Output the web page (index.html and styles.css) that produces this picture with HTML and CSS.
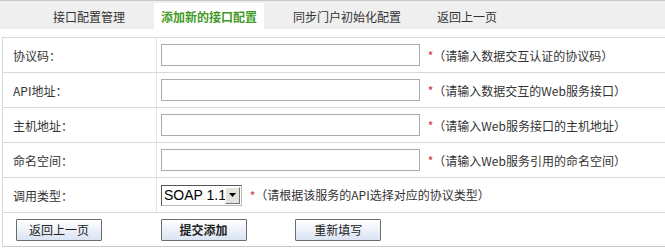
FILE: index.html
```html
<!DOCTYPE html>
<html lang="zh-CN">
<head>
  <meta charset="UTF-8" />
  <title>添加新的接口配置</title>
  <link rel="stylesheet" href="styles.css">
</head>
<body>

  <!-- Tabs -->
  <div class="tab-bar">
    <a class="tab">接口配置管理</a>
    <a class="tab active">添加新的接口配置</a>
    <a class="tab">同步门户初始化配置</a>
    <a class="tab">返回上一页</a>
  </div>

  <!-- Form -->
  <table class="form-table">
    <tr>
      <td class="label">协议码：</td>
      <td class="field">
        <input type="text" class="text-input">
        <span class="req">*</span><span class="hint">（请输入数据交互认证的协议码）</span>
      </td>
    </tr>
    <tr>
      <td class="label">API地址：</td>
      <td class="field">
        <input type="text" class="text-input">
        <span class="req">*</span><span class="hint">（请输入数据交互的Web服务接口）</span>
      </td>
    </tr>
    <tr>
      <td class="label">主机地址：</td>
      <td class="field">
        <input type="text" class="text-input">
        <span class="req">*</span><span class="hint">（请输入Web服务接口的主机地址）</span>
      </td>
    </tr>
    <tr>
      <td class="label">命名空间：</td>
      <td class="field">
        <input type="text" class="text-input">
        <span class="req">*</span><span class="hint">（请输入Web服务引用的命名空间）</span>
      </td>
    </tr>
    <tr>
      <td class="label">调用类型：</td>
      <td class="field">
        <div class="select-box">
          <span class="select-value">SOAP 1.1</span>
          <span class="select-arrow">
            <svg width="7" height="4" viewBox="0 0 7 4"><path d="M0 0h7L3.5 4z" fill="#000"/></svg>
          </span>
        </div>
        <span class="req">*</span><span class="hint">（请根据该服务的API选择对应的协议类型）</span>
      </td>
    </tr>
    <tr class="btn-row">
      <td class="label"><button class="btn">返回上一页</button></td>
      <td class="field">
        <button class="btn bold">提交添加</button>
        <button class="btn reset">重新填写</button>
      </td>
    </tr>
  </table>

</body>
</html>
```

FILE: styles.css
```css
body {
  margin: 0;
  background: #fff;
  font-family: "Noto Sans CJK SC", "Liberation Sans", sans-serif;
  font-size: 12px;
  color: #333;
  width: 665px;
}

.tab-bar {
  display: flex;
  align-items: flex-end;
  gap: 22px;
  height: 29px;
  padding-left: 46px;
  background: #efefef;
  border-top: 1px solid #c8c8c8;
  box-sizing: border-box;
}

.tab {
  display: flex;
  align-items: center;
  height: 26px;
  padding: 0 7px;
  color: #333;
  cursor: pointer;
}

.tab.active {
  background: #fff;
  color: #3f9a26;
  font-weight: bold;
}

.form-table {
  margin: 8px 0 0 2px;
  width: 663px;
  border-collapse: collapse;
  border-left: 1px solid #d8d8d8;
  border-top: 1px solid #d8d8d8;
}

.form-table td {
  height: 34px;
  padding: 0;
  border-bottom: 1px solid #d8d8d8;
  vertical-align: middle;
}

.label {
  width: 154px;
  padding-left: 10px !important;
  border-right: 1px solid #e4e4e4;
  box-sizing: border-box;
}

.field {
  padding-left: 4px !important;
  white-space: nowrap;
}

.text-input {
  width: 259px;
  height: 22px;
  margin: 0;
  border: 1px solid #a5acb2;
  box-sizing: border-box;
  vertical-align: middle;
}

.req {
  color: #d0303a;
  margin-left: 5px;
  vertical-align: middle;
}

.hint {
  vertical-align: middle;
}

.select-box {
  display: inline-flex;
  align-items: center;
  width: 81px;
  height: 21px;
  border: 1px solid;
  border-color: #555 #bbb #bbb #555;
  box-sizing: border-box;
  vertical-align: middle;
  background: #fff;
}

.select-value {
  flex: 1;
  padding-left: 2px;
  font-family: "Liberation Sans", sans-serif;
  font-size: 14px;
  color: #000;
  white-space: nowrap;
  overflow: hidden;
}

.select-arrow {
  display: flex;
  align-items: center;
  justify-content: center;
  flex: none;
  width: 15px;
  height: 17px;
  margin-right: 1px;
  background: #e4e2dc;
  border: 1px solid;
  border-color: #fff #777 #777 #fff;
  box-sizing: border-box;
}

.btn-row td {
  height: 33px;
  border-bottom: 1px solid #c8c8c8;
}

.btn-row .label {
  padding-left: 13px !important;
  border-right: none;
}

.btn {
  width: 86px;
  height: 22px;
  padding: 0;
  margin: 0;
  font-family: "Noto Sans CJK SC", sans-serif;
  font-size: 12px;
  color: #222;
  background: linear-gradient(#ffffff, #dae3f3);
  border: 1px solid #6d6d6d;
  border-radius: 1px;
  cursor: pointer;
}

.btn.bold {
  font-weight: bold;
}

.btn.reset {
  margin-left: 46px;
}
```
